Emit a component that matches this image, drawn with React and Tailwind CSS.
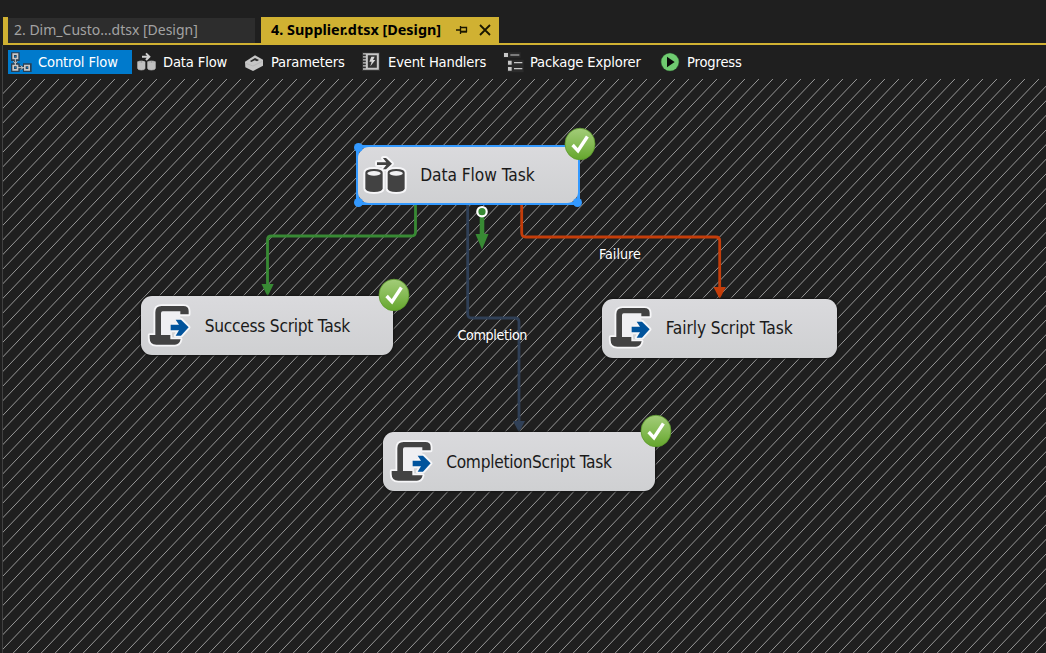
const HATCH = Array.from({ length: 118 }, (_, k) => {
  const x = 13.9 + 14 * k;
  return `M${x} 0L${x - 560} ${560 * 1.0443}`;
}).join('');

function ControlFlowIcon() {
  return (
    <svg className="h-[22px] w-[22px] shrink-0" viewBox="30 150 66 66" fill="none">
      <g stroke="#2b3f50" strokeWidth="11">
        <path d="M38.500 159.500H53.500V174.500H38.500ZM38.500 192.500H53.500V207.500H38.500ZM74.500 192.500H89.500V207.500H74.500Z" />
        <path d="M46 174V192M54 200H74" />
      </g>
      <g stroke="#c8c8c8" strokeWidth="5">
        <path d="M39.500 159.500H52.500V172.500H39.500ZM39.500 193.500H52.500V206.500H39.500ZM74.500 193.500H87.500V206.500H74.500Z" />
        <path d="M46 174V192M54 200H72" strokeWidth="3" />
        <path d="M40 181L46 188L52 181M62 194L69 200L62 206" strokeWidth="3" />
      </g>
    </svg>
  );
}

function DataFlowIcon() {
  return (
    <svg className="h-[22px] w-[22px] shrink-0" viewBox="405 150 66 66">
      <path d="M413 182V202Q413 207 424 207Q435 207 435 202V182ZM443 182V202Q443 207 454 207Q466 207 466 202V182Z" fill="#c0c0c0" stroke="#c0c0c0" strokeWidth="2" />
      <ellipse cx="424" cy="183" rx="8" ry="2.500" fill="#666" stroke="#c8c8c8" strokeWidth="3" />
      <ellipse cx="454.500" cy="183" rx="8.500" ry="2.500" fill="#666" stroke="#c8c8c8" strokeWidth="3" />
      <path d="M426 167H446M438 157L448 167L438 177" fill="none" stroke="#d0d0d0" strokeWidth="6" />
    </svg>
  );
}

function ParametersIcon() {
  return (
    <svg className="h-[22px] w-[22px] shrink-0" viewBox="39 150 66 66">
      <path d="M45 182L75 163L99 176V194L69 210L46 199Z" fill="#c6c6c6" />
      <path d="M60 180L75 171L87 177L81 181L74 178L64 183Z" fill="#2b2b2b" />
      <path d="M47 187L69 195L97 181" fill="none" stroke="#b0b0b0" strokeWidth="2" />
    </svg>
  );
}

function EventIcon() {
  return (
    <svg className="h-[22px] w-[22px] shrink-0" viewBox="390 150 66 66" fill="none">
      <path d="M396 154H450V210H396Z" fill="#333" />
      <path d="M410.500 159.500H443.500V203.500H410.500Z" stroke="#c8c8c8" strokeWidth="6" />
      <path d="M399 158.500H408M399 167.500H408M399 176.500H408M399 185.500H408M399 194.500H408M399 204H408" stroke="#c8c8c8" strokeWidth="4" />
      <path d="M424 167H434L429 177H436L421 196L425 182H418Z" fill="#d8d8d8" />
    </svg>
  );
}

function ExplorerIcon() {
  return (
    <svg className="h-[22px] w-[22px] shrink-0" viewBox="36 60 66 66">
      <path d="M40 64H92V80H40ZM52 86H101V124H52Z" fill="#2b2b2b" />
      <path d="M42 66H54V78H42ZM54 89H65V101H54ZM54 108H65V119H54Z" fill="#c8c8c8" />
      <path d="M61 72H88" stroke="#8c8c8c" strokeWidth="5" />
      <path d="M72 95H97M72 113H97" stroke="#c8c8c8" strokeWidth="4" />
    </svg>
  );
}

function ProgressIcon() {
  return (
    <svg className="h-[22px] w-[22px] shrink-0" viewBox="507 60 66 66">
      <circle cx="540" cy="93" r="28" fill="#2d5530" />
      <circle cx="540" cy="93" r="26" fill="#6fcb70" />
      <path d="M531 77L554 93L531 109Z" fill="#0a0a0a" />
    </svg>
  );
}

function ScriptIcon() {
  const top = 'M75 194V126Q75 107 94 107H159Q175 107 175 122V132H150V123H97Q92 123 92 129V194Z';
  const bottom = 'M58 194H120V207H151Q147 223 134 223H78Q58 223 58 203Z';
  const arrow = 'M121 163H146L136 148H152L175 171L152 196H136L146 180H121Z';
  return (
    <svg className="mb-[2px] h-[48px] w-[46.67px] shrink-0" viewBox="50 92 140 144">
      <g fill="#f6f6f8" stroke="#f6f6f8" strokeWidth="11" strokeLinejoin="round">
        <path d={top} />
        <path d={bottom} />
        <path d={arrow} />
      </g>
      <path d="M92 122H150V150L125 160V195H92Z" fill="#efeff2" />
      <path d={top} fill="#424242" />
      <path d={bottom} fill="#424242" />
      <path d={arrow} fill="#00539c" />
    </svg>
  );
}

function CylindersIcon() {
  const a = 'M76 171Q76 160 102 160Q128 160 128 171V218Q128 229 102 229Q76 229 76 218Z';
  const b = 'M143 171Q143 160 168.500 160Q194 160 194 171V218Q194 229 168.500 229Q143 229 143 218Z';
  const arrow = 'M111 140H139L129 127H138L156 144L138 161H129L139 148H111Z';
  return (
    <svg className="h-[43.33px] w-[46.67px] shrink-0" viewBox="66 112 140 130">
      <g fill="#f6f6f8" stroke="#f6f6f8" strokeWidth="12" strokeLinejoin="round">
        <path d={a} />
        <path d={b} />
        <path d={arrow} />
      </g>
      <path d={a} fill="#424242" />
      <path d={b} fill="#424242" />
      <ellipse cx="102" cy="173" rx="20" ry="7" fill="#f0f0f2" />
      <ellipse cx="168.500" cy="173" rx="20" ry="7" fill="#f0f0f2" />
      <path d={arrow} fill="#424242" />
    </svg>
  );
}

function Check({ place }) {
  return (
    <svg className={`absolute h-[34px] w-[32px] ${place}`} viewBox="0 0 32 34">
      <defs>
        <linearGradient id="ok" x1="0" y1="0" x2="0" y2="1">
          <stop offset="0" stopColor="#a3cc79" />
          <stop offset="0.5" stopColor="#86bb55" />
          <stop offset="1" stopColor="#64a52c" />
        </linearGradient>
      </defs>
      <ellipse cx="16" cy="17" rx="15" ry="15.800" fill="url(#ok)" stroke="#5d9a2d" strokeWidth="0.800" />
      <path d="M8.600 18L14 23.800L23.400 9.500" fill="none" stroke="#fff" strokeWidth="3.400" />
    </svg>
  );
}

function Task({ place, label, icon, children }) {
  return (
    <div className={`absolute flex items-center rounded-[11px] bg-linear-to-b from-[#dadadd] to-[#cfd0d2] text-[17.2px] leading-none whitespace-nowrap text-[#1a1a1a] ${place}`}>
      {icon}
      <span className="pt-[2px]">{label}</span>
      {children}
    </div>
  );
}

const TOOLS = [
  { label: 'Control Flow', Icon: ControlFlowIcon, box: 'w-[124px] bg-[#007acc] pl-[2px] mr-[3px]' },
  { label: 'Data Flow', Icon: DataFlowIcon, box: 'w-[108px]' },
  { label: 'Parameters', Icon: ParametersIcon, box: 'w-[117px]' },
  { label: 'Event Handlers', Icon: EventIcon, box: 'w-[142px]' },
  { label: 'Package Explorer', Icon: ExplorerIcon, box: 'w-[157px]' },
  { label: 'Progress', Icon: ProgressIcon, box: 'w-[100px]' },
];

export default function App() {
  return (
    <div className="flex h-[653px] w-[1046px] flex-col overflow-hidden bg-[#1f1f1f] pt-[17px] font-['DejaVu_Sans_Condensed','DejaVu_Sans',sans-serif]">
      <div className="ml-[3px] flex h-7 shrink-0 items-stretch border-b-2 border-[#d0b132] font-['Noto_Sans',sans-serif] leading-none whitespace-nowrap">
        <div className="w-[5px] bg-[#d0b132]" />
        <div className="mt-px mr-[6px] flex w-[247px] items-center bg-[#2d2d2d] pb-px pl-[6px] text-[14px] text-[#a3a3a3]">
          2. Dim_Custo...dtsx [Design]
        </div>
        <div className="flex w-[238px] items-center bg-[#d0b132] pl-[10px] text-[14.4px] font-bold text-black">
          <span className="w-[185px] pt-px">4. Supplier.dtsx [Design]</span>
          <svg className="h-[10px] w-[12px]" viewBox="0 0 12 10" fill="none" stroke="#1a1600">
            <path d="M0 5H4M4.500 1V9M5 2.500H10.500V7" strokeWidth="1.300" />
            <path d="M5 6.700H11" strokeWidth="2" />
          </svg>
          <svg className="ml-[11px] h-[12px] w-[12px]" viewBox="0 0 12 12" fill="none" stroke="#1a1600" strokeWidth="1.800">
            <path d="M1 1L11 11M11 1L1 11" />
          </svg>
        </div>
      </div>

      <div className="ml-[2px] flex min-h-0 flex-1 flex-col border-l border-[#414141]">
        <div className="flex h-[34px] shrink-0 pt-[5px] pb-[5px] pl-[5px] text-[14.6px] leading-none tracking-[-0.15px] whitespace-nowrap text-white">
          {TOOLS.map(({ label, Icon, box }) => (
            <div key={label} className={`flex items-center gap-[6px] ${box}`}>
              <Icon />
              <span>{label}</span>
            </div>
          ))}
        </div>

        <div className="relative min-h-0 flex-1 overflow-hidden">
          <svg className="block h-[574px] w-[1043px]" viewBox="0 0 1043 574">
            <path d={HATCH} fill="none" stroke="#989898" strokeWidth="1" />
          </svg>

          <svg className="absolute inset-0 h-[574px] w-[1043px]" viewBox="3 79 1043 574" fill="none" strokeWidth="2.800">
            <path d="M415.500 205V232Q415.500 236 411.500 236H271.500Q267.500 236 267.500 240V286" stroke="#388a34" />
            <path d="M261.500 284H273.700L267.600 296.500Z" fill="#388a34" />
            <path d="M467.700 205V314Q467.700 318 471.700 318H515Q519 318 519 322V424" stroke="#304057" />
            <path d="M513 421H525L519 432.500Z" fill="#304057" />
            <path d="M521.700 205V233Q521.700 237 525.700 237H715.700Q719.700 237 719.700 241V289" stroke="#c43d0a" />
            <path d="M713.500 287H725.900L719.700 299Z" fill="#c43d0a" />
            <path d="M482 216V236" stroke="#388a34" strokeWidth="4.600" />
            <path d="M475.500 234H488.500L482 249.500Z" fill="#388a34" />
            <circle cx="482" cy="211.700" r="4.700" fill="#388a34" stroke="#fff" strokeWidth="2.200" />
          </svg>

          <span className="absolute top-[168px] left-[596px] text-[14.2px] leading-[14px] text-white">Failure</span>
          <span className="absolute top-[249px] left-[454.500px] text-[14.2px] leading-[14px] tracking-[-0.35px] text-white">Completion</span>

          <div className="absolute top-[66px] left-[353px] h-[60px] w-[224px] border-[3px] border-[#3399ff] bg-[#2a2a2a]" />
          <Task place="left-[355px] top-[68px] h-[56px] w-[220px] gap-[11.500px] pl-[4px] tracking-[-0.05px]" label="Data Flow Task" icon={<CylindersIcon />}>
            <span className="absolute -top-[4px] -left-[4px] h-[9px] w-[9px] rounded-full bg-[#3399ff]" />
            <span className="absolute -bottom-[4px] -left-[4px] h-[9px] w-[9px] rounded-full bg-[#3399ff]" />
            <span className="absolute -right-[4px] -bottom-[4px] h-[9px] w-[9px] rounded-full bg-[#3399ff]" />
            <Check place="-top-[20px] left-[206px]" />
          </Task>
          <Task place="left-[138px] top-[217px] h-[59px] w-[252px] gap-[11px] pl-[6px] tracking-[-0.25px] shadow-[0_0_2px_1px_#151515]" label="Success Script Task" icon={<ScriptIcon />}>
            <Check place="-top-[18px] left-[237px]" />
          </Task>
          <Task place="left-[599px] top-[219.500px] h-[59px] w-[234.500px] gap-[11px] pl-[6px] tracking-[-0.1px] shadow-[0_0_2px_1px_#151515]" label="Fairly Script Task" icon={<ScriptIcon />} />
          <Task place="left-[379.500px] top-[353px] h-[59px] w-[272.500px] gap-[11px] pl-[6px] tracking-[-0.28px] shadow-[0_0_2px_1px_#151515]" label="CompletionScript Task" icon={<ScriptIcon />}>
            <Check place="-top-[18px] left-[257px]" />
          </Task>
        </div>
      </div>
    </div>
  );
}
